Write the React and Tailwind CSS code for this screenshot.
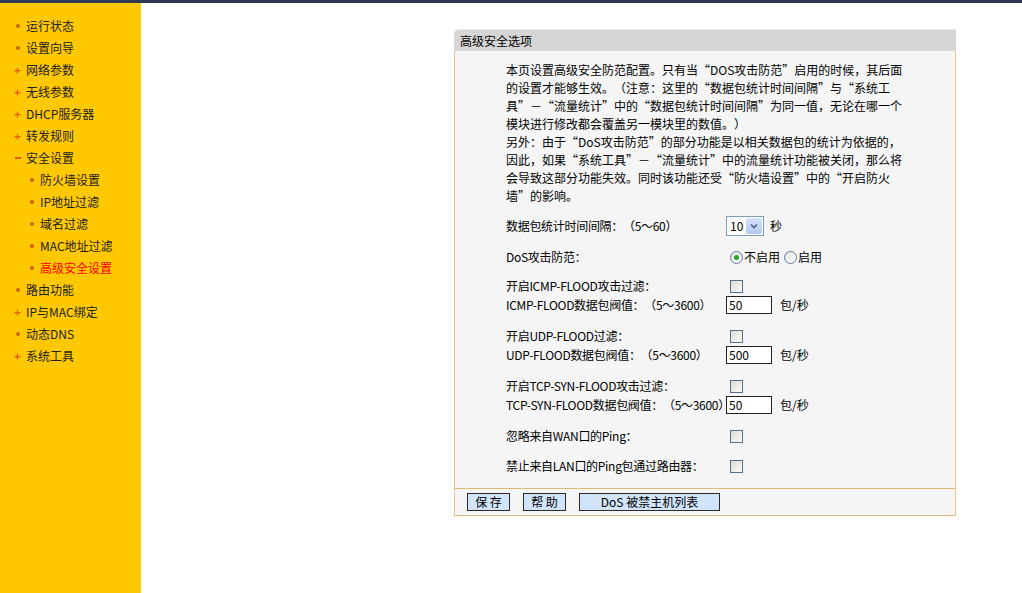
const menu = [
  { label: "运行状态", mark: "dot" },
  { label: "设置向导", mark: "dot" },
  { label: "网络参数", mark: "plus" },
  { label: "无线参数", mark: "plus" },
  { label: "DHCP服务器", mark: "plus" },
  { label: "转发规则", mark: "plus" },
  { label: "安全设置", mark: "minus" },
  { label: "防火墙设置", mark: "dot", sub: true },
  { label: "IP地址过滤", mark: "dot", sub: true },
  { label: "域名过滤", mark: "dot", sub: true },
  { label: "MAC地址过滤", mark: "dot", sub: true },
  { label: "高级安全设置", mark: "dot", sub: true, active: true },
  { label: "路由功能", mark: "dot" },
  { label: "IP与MAC绑定", mark: "plus" },
  { label: "动态DNS", mark: "dot" },
  { label: "系统工具", mark: "plus" },
];

function Mark({ type }) {
  if (type === "plus")
    return <span className="w-[9px] text-center text-[#e05a00] font-bold text-[11px] leading-none">+</span>;
  if (type === "minus")
    return <span className="w-[9px] flex justify-center"><span className="block w-[6px] h-[2px] bg-[#e05a00]" /></span>;
  return <span className="w-[9px] flex justify-center"><span className="block w-[4px] h-[4px] rounded-full bg-[#c8650f]" /></span>;
}

function Sidebar() {
  return (
    <div className="w-[141px] shrink-0 bg-[#ffc800] pt-[12px] min-h-[590px]">
      {menu.map((m) => (
        <div key={m.label} className={`h-[22px] flex items-center ${m.sub ? "pl-[27px]" : "pl-[13px]"}`}>
          <Mark type={m.mark} />
          <span className={`ml-[4px] ${m.active ? "text-[#ff0000]" : "text-[#222]"}`}>{m.label}</span>
        </div>
      ))}
    </div>
  );
}

function Checkbox() {
  return <span className="block w-[13px] h-[13px] border border-[#5a6f85] bg-gradient-to-br from-[#dcdcd7] to-[#fbfbf9] ml-[4px]" />;
}

function Num({ value }) {
  return (
    <span className="block w-[46px] h-[18px] border border-[#222] bg-white text-[12px] leading-[16px] pl-[2px]">{value}</span>
  );
}

function Row({ label, children, mt, h = 18 }) {
  return (
    <div className={`flex items-center ${mt} ${h === 20 ? "h-[20px]" : "h-[18px]"}`}>
      <span className="w-[220px] shrink-0 whitespace-nowrap tracking-[-0.3px]">{label}</span>
      <div className="flex items-center">{children}</div>
    </div>
  );
}

export default function App() {
  return (
    <div className="w-[1022px] h-[593px] overflow-hidden bg-white text-[12px] text-black [text-spacing-trim:space-all]" style={{ fontFamily: '"Noto Sans CJK SC", "Noto Sans", sans-serif' }}>
      <div className="h-[3px] bg-[#2e3a55]" />
      <div className="flex">
        <Sidebar />
        <div className="flex-1 pl-[313px] pt-[26px]">
          <div className="w-[502px]">
            <div className="h-[22px] bg-[#d6d6d6] rounded-tl-[5px] border-t border-[#e8e8e8] flex items-center pl-[6px]">高级安全选项</div>
            <div className="bg-[#f5f5f5] border-l border-r border-[#e8c48a]">
              <div className="pl-[51px] pt-[10px] pb-[13px]">
                <div className="leading-[18px] whitespace-nowrap">
                  本页设置高级安全防范配置。只有当“DOS攻击防范”启用的时候，其后面<br />
                  的设置才能够生效。（注意：这里的“数据包统计时间间隔”与“系统工<br />
                  具”－“流量统计”中的“数据包统计时间间隔”为同一值，无论在哪一个<br />
                  模块进行修改都会覆盖另一模块里的数值。）<br />
                  另外：由于“DoS攻击防范”的部分功能是以相关数据包的统计为依据的，<br />
                  因此，如果“系统工具”－“流量统计”中的流量统计功能被关闭，那么将<br />
                  会导致这部分功能失效。同时该功能还受“防火墙设置”中的“开启防火<br />
                  墙”的影响。
                </div>
                <Row label="数据包统计时间间隔：（5～60）" mt="mt-[11px]" h={20}>
                  <span className="flex items-center w-[38px] h-[20px] border border-[#7f9db9] bg-white">
                    <span className="flex-1 pl-[3px] leading-none">10</span>
                    <span className="w-[16px] h-[16px] mr-[1px] bg-gradient-to-b from-[#d6e3fd] to-[#b3c9f5] rounded-[2px] flex items-center justify-center">
                      <svg width="8" height="6" viewBox="0 0 8 6"><path d="M1 1.5 L4 4.5 L7 1.5" stroke="#4d6185" strokeWidth="1.6" fill="none" /></svg>
                    </span>
                  </span>
                  <span className="ml-[6px]">秒</span>
                </Row>
                <Row label="DoS攻击防范：" mt="mt-[11px]" h={20}>
                  <span className="ml-[4px] w-[13px] h-[13px] rounded-full border border-[#5d7a9a] bg-gradient-to-br from-[#e3e3df] to-white flex items-center justify-center">
                    <span className="w-[5px] h-[5px] rounded-full bg-[#2aa52a]" />
                  </span>
                  <span className="ml-[1px]">不启用</span>
                  <span className="ml-[4px] w-[13px] h-[13px] rounded-full border border-[#5d7a9a] bg-gradient-to-br from-[#e3e3df] to-white" />
                  <span className="ml-[1px]">启用</span>
                </Row>
                <Row label="开启ICMP-FLOOD攻击过滤：" mt="mt-[10px]"><Checkbox /></Row>
                <Row label="ICMP-FLOOD数据包阀值：（5～3600）" h={20}>
                  <Num value="50" /><span className="ml-[8px]">包/秒</span>
                </Row>
                <Row label="开启UDP-FLOOD过滤：" mt="mt-[12px]"><Checkbox /></Row>
                <Row label="UDP-FLOOD数据包阀值：（5～3600）" h={20}>
                  <Num value="500" /><span className="ml-[8px]">包/秒</span>
                </Row>
                <Row label="开启TCP-SYN-FLOOD攻击过滤：" mt="mt-[12px]"><Checkbox /></Row>
                <Row label="TCP-SYN-FLOOD数据包阀值：（5～3600）" h={20}>
                  <Num value="50" /><span className="ml-[8px]">包/秒</span>
                </Row>
                <Row label="忽略来自WAN口的Ping：" mt="mt-[12px]"><Checkbox /></Row>
                <Row label="禁止来自LAN口的Ping包通过路由器：" mt="mt-[12px]"><Checkbox /></Row>
              </div>
              <div className="border-t border-b border-[#e0b87a] h-[28px] flex items-center pl-[12px] gap-[13px]">
                <button className="w-[43px] h-[18px] border border-[#2b2b2b] bg-[#d2e4fa] leading-none">保 存</button>
                <button className="w-[43px] h-[18px] border border-[#2b2b2b] bg-[#d2e4fa] leading-none">帮 助</button>
                <button className="w-[141px] h-[18px] border border-[#2b2b2b] bg-[#d2e4fa] leading-none">DoS 被禁主机列表</button>
              </div>
            </div>
          </div>
        </div>
      </div>
    </div>
  );
}
